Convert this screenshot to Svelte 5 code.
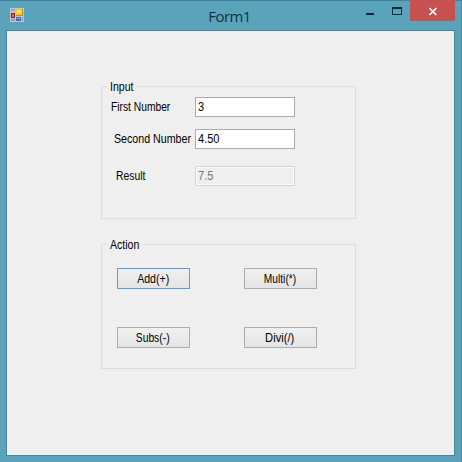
<script>
  const rows = [
    { label: 'First Number', value: '3', scale: 0.855, indent: 10, gap: 0 },
    { label: 'Second Number', value: '4.50', scale: 0.888, indent: 13, gap: 12 },
    { label: 'Result', value: '7.5', scale: 0.865, indent: 15, gap: 17, disabled: true }
  ];
  const actions = [
    { label: 'Add(+)', scale: 0.88, focused: true },
    { label: 'Multi(*)', scale: 0.85 },
    { label: 'Subs(-)', scale: 0.86 },
    { label: 'Divi(/)', scale: 0.93 }
  ];
</script>

<div class="window">
  <header>
    <svg class="app" width="14" height="14" viewBox="0 0 14 14">
      <rect width="14" height="14" fill="#c3c2d0" />
      <rect x="1" y="1" width="4" height="2" fill="#9fa7b9" />
      <rect x="1" y="5" width="4" height="5" fill="#8c2525" />
      <rect x="2" y="6" width="2" height="3" fill="#d8675c" />
      <rect x="6" y="1" width="7" height="7" fill="#b98c20" />
      <rect x="6" y="1" width="6" height="6" fill="#f5c92f" />
      <rect x="7" y="2" width="4" height="3" fill="#fbe06a" />
      <rect x="6" y="9" width="5" height="4" fill="#3d70b8" />
      <rect x="7" y="10" width="3" height="1" fill="#85b3e2" />
      <rect x="1" y="11" width="4" height="2" fill="#9c9cac" />
      <rect x="12" y="9" width="1" height="4" fill="#8f9bb5" />
    </svg>
    <h1>Form1</h1>
    <div class="controls">
      <svg width="68" height="21" viewBox="0 0 68 21">
        <path d="M24 13h8v2h-8z" fill="#0d2b38" />
        <path d="M50 7h10v8H50z M51 9v5h8V9z" fill="#0d2b38" fill-rule="evenodd" />
      </svg>
      <div class="close">
        <svg width="45" height="21" viewBox="0 0 45 21">
          <path d="M19.4 8l7 7M26.4 8l-7 7" stroke="#fff" stroke-width="1.7" fill="none" />
        </svg>
      </div>
    </div>
  </header>

  <main>
    <section class="group input">
      <h2><span class="t" style:--sx={0.88}>Input</span></h2>
      {#each rows as row}
        <div class="row" style:margin-top="{row.gap}px">
          <div class="label" style:padding-left="{row.indent}px">
            <span class="t" style:--sx={row.scale}>{row.label}</span>
          </div>
          <div class="box" class:disabled={row.disabled}>
            <span class="t" style:--sx={0.92}>{row.value}</span>
          </div>
        </div>
      {/each}
    </section>

    <section class="group action">
      <h2><span class="t" style:--sx={0.88}>Action</span></h2>
      <div class="buttons">
        {#each actions as action}
          <button class:focused={action.focused}>
            <span class="t mid" style:--sx={action.scale}>{action.label}</span>
          </button>
        {/each}
      </div>
    </section>
  </main>
</div>

<style>
  .window {
    box-sizing: border-box;
    width: 462px;
    height: 462px;
    padding: 0 7px 6px 6px;
    background: #5ba3ba;
    box-shadow: inset 0 1px #43849a, inset -1px 0 #4b8ea5;
    font-family: "Liberation Sans", Arial, sans-serif;
    font-size: 12px;
    color: #000;
    display: flex;
    flex-direction: column;
  }
  header {
    height: 30px;
    display: grid;
    grid-template-columns: 113px 1fr 113px;
    align-items: start;
  }
  .app {
    margin: 8px 0 0 4px;
  }
  h1 {
    margin: 6px 0 0 -2px;
    font: 400 15px/20px "Open Sans", "Noto Sans", sans-serif;
    letter-spacing: -0.6px;
    text-align: center;
    color: #0f3341;
  }
  .controls {
    display: flex;
    justify-content: flex-end;
  }
  .controls svg {
    display: block;
  }
  .close {
    width: 45px;
    background: #c75050;
    flex: none;
  }
  main {
    box-sizing: border-box;
    flex: 1;
    border: 1px solid #4a8499;
    background: #efefef;
    padding: 55px 0 0 94px;
  }
  .group {
    box-sizing: border-box;
    width: 255px;
    border: 1px solid #dcdcdc;
  }
  .input {
    height: 133px;
  }
  .action {
    height: 125px;
    margin-top: 25px;
  }
  h2 {
    margin: -7px 0 0 5px;
    width: 33px;
    height: 14px;
    padding-left: 3px;
    font: inherit;
    line-height: 14px;
    background: #efefef;
  }
  .input h2 {
    width: 27px;
    margin-bottom: 3px;
  }
  .t {
    display: inline-block;
    white-space: nowrap;
    transform: scaleX(var(--sx));
    transform-origin: left center;
  }
  .t.mid {
    transform-origin: center;
    margin-left: -1px;
  }
  .row {
    display: flex;
    height: 20px;
    line-height: 20px;
  }
  .label {
    box-sizing: border-box;
    width: 93px;
    flex: none;
    margin-left: -1px;
    white-space: nowrap;
  }
  .box {
    box-sizing: border-box;
    width: 100px;
    height: 20px;
    margin-left: 1px;
    padding-left: 2px;
    border: 1px solid #ababab;
    background: #fff;
    line-height: 19px;
  }
  .disabled {
    border-color: #d4d4d4;
    background: #efefef;
    box-shadow: inset 0 0 0 1px #fafafa;
    color: #777;
  }
  .buttons {
    display: grid;
    grid-template-columns: 73px 73px;
    gap: 38px 54px;
    margin: 16px 0 0 15px;
  }
  button {
    box-sizing: border-box;
    display: flex;
    align-items: center;
    justify-content: center;
    height: 21px;
    padding: 0;
    border: 1px solid #acacac;
    border-radius: 0;
    background: linear-gradient(#f0f0f0, #e4e4e4);
    font: inherit;
    color: inherit;
  }
  .focused {
    border-color: #569de5;
  }
</style>
